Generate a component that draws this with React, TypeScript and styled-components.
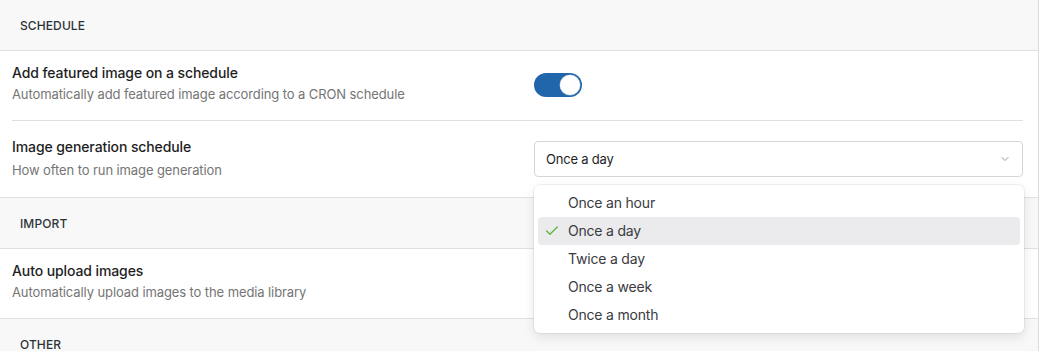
import React from "react";
import styled, { createGlobalStyle } from "styled-components";
import { Check, ChevronDown } from "lucide-react";

const GlobalStyle = createGlobalStyle`
  body {
    margin: 0;
    background: #ffffff;
    font-family: Inter, "Noto Sans", "Liberation Sans", sans-serif;
    color: #1e1e1e;
  }
`;

const options = [
  "Once an hour",
  "Once a day",
  "Twice a day",
  "Once a week",
  "Once a month"
];

const Page = styled.div`
  width: 1038px;
  height: 351px;
  border-right: 1px solid #dcdcdc;
  overflow: hidden;
`;

const SectionHeader = styled.div<{ $first?: boolean }>`
  height: 50px;
  display: flex;
  align-items: center;
  padding-left: 20px;
  background: #f8f8f8;
  border-top: ${(p) => (p.$first ? "none" : "1px solid #e0e0e0")};
  border-bottom: 1px solid #e0e0e0;
  font-size: 12px;
  font-weight: 500;
  letter-spacing: 0.1px;
  text-transform: uppercase;
  color: #2c3338;
`;

const Row = styled.div<{ $last?: boolean; $pad: string }>`
  display: grid;
  grid-template-columns: 522px 1fr;
  align-items: center;
  margin: 0 15px 0 12px;
  padding: ${(p) => p.$pad};
  border-bottom: ${(p) => (p.$last ? "none" : "1px solid #e0e0e0")};
`;

const Label = styled.div<{ $gap: number }>`
  display: flex;
  flex-direction: column;
  gap: ${(p) => p.$gap}px;
  .title {
    font-size: 14px;
    line-height: 18px;
    font-weight: 500;
    letter-spacing: -0.1px;
    color: #1e1e1e;
  }
  .desc {
    font-size: 13px;
    line-height: 18px;
    letter-spacing: -0.1px;
    color: #757575;
  }
`;

const Toggle = styled.div`
  width: 48px;
  height: 24px;
  border-radius: 12px;
  background: #2166ab;
  display: flex;
  align-items: center;
  justify-content: flex-end;
  padding: 0 2px;
  box-sizing: border-box;
  margin-top: 3px;
  .knob {
    width: 20px;
    height: 20px;
    border-radius: 50%;
    background: #fff;
    box-shadow: 0 0 0 0.5px #9bb5d1;
  }
`;

const SelectWrap = styled.div`
  position: relative;
`;

const SelectBox = styled.div`
  height: 36px;
  box-sizing: border-box;
  border: 1px solid #d6d6d6;
  border-radius: 4px;
  display: flex;
  align-items: center;
  justify-content: space-between;
  padding: 0 11px 0 11px;
  font-size: 13px;
  letter-spacing: -0.2px;
  color: #1e1e1e;
  svg {
    color: #8a8a8a;
  }
`;

const Menu = styled.ul`
  position: absolute;
  top: calc(100% + 8px);
  left: 0;
  right: -1px;
  margin: 0;
  padding: 4px;
  list-style: none;
  background: #fff;
  border-radius: 6px;
  box-shadow: 0 0 0 1px rgba(0, 0, 0, 0.05), 0 4px 12px rgba(0, 0, 0, 0.1);
  z-index: 2;
`;

const Item = styled.li<{ $active?: boolean }>`
  height: 28px;
  display: flex;
  align-items: center;
  padding-left: 30px;
  position: relative;
  border-radius: 4px;
  font-size: 14px;
  letter-spacing: -0.2px;
  color: #3a3a3f;
  background: ${(p) => (p.$active ? "#ebebed" : "transparent")};
  svg {
    position: absolute;
    left: 6px;
    color: #5fb541;
  }
`;

export default function App() {
  const selected = "Once a day";
  return (
    <Page>
      <GlobalStyle />
      <SectionHeader $first>Schedule</SectionHeader>
      <Row $pad="13px 0 17px">
        <Label $gap={3}>
          <span className="title">Add featured image on a schedule</span>
          <span className="desc">
            Automatically add featured image according to a CRON schedule
          </span>
        </Label>
        <Toggle>
          <span className="knob" />
        </Toggle>
      </Row>
      <Row $pad="17px 0 18px" $last>
        <Label $gap={5}>
          <span className="title">Image generation schedule</span>
          <span className="desc">How often to run image generation</span>
        </Label>
        <SelectWrap>
          <SelectBox>
            {selected}
            <ChevronDown size={12} strokeWidth={1.8} />
          </SelectBox>
          <Menu>
            {options.map((o) => (
              <Item key={o} $active={o === selected}>
                {o === selected && <Check size={16} strokeWidth={2} />}
                {o}
              </Item>
            ))}
          </Menu>
        </SelectWrap>
      </Row>
      <SectionHeader>Import</SectionHeader>
      <Row $pad="13px 0 17px" $last>
        <Label $gap={3}>
          <span className="title">Auto upload images</span>
          <span className="desc">Automatically upload images to the media library</span>
        </Label>
        <div />
      </Row>
      <SectionHeader>Other</SectionHeader>
    </Page>
  );
}
